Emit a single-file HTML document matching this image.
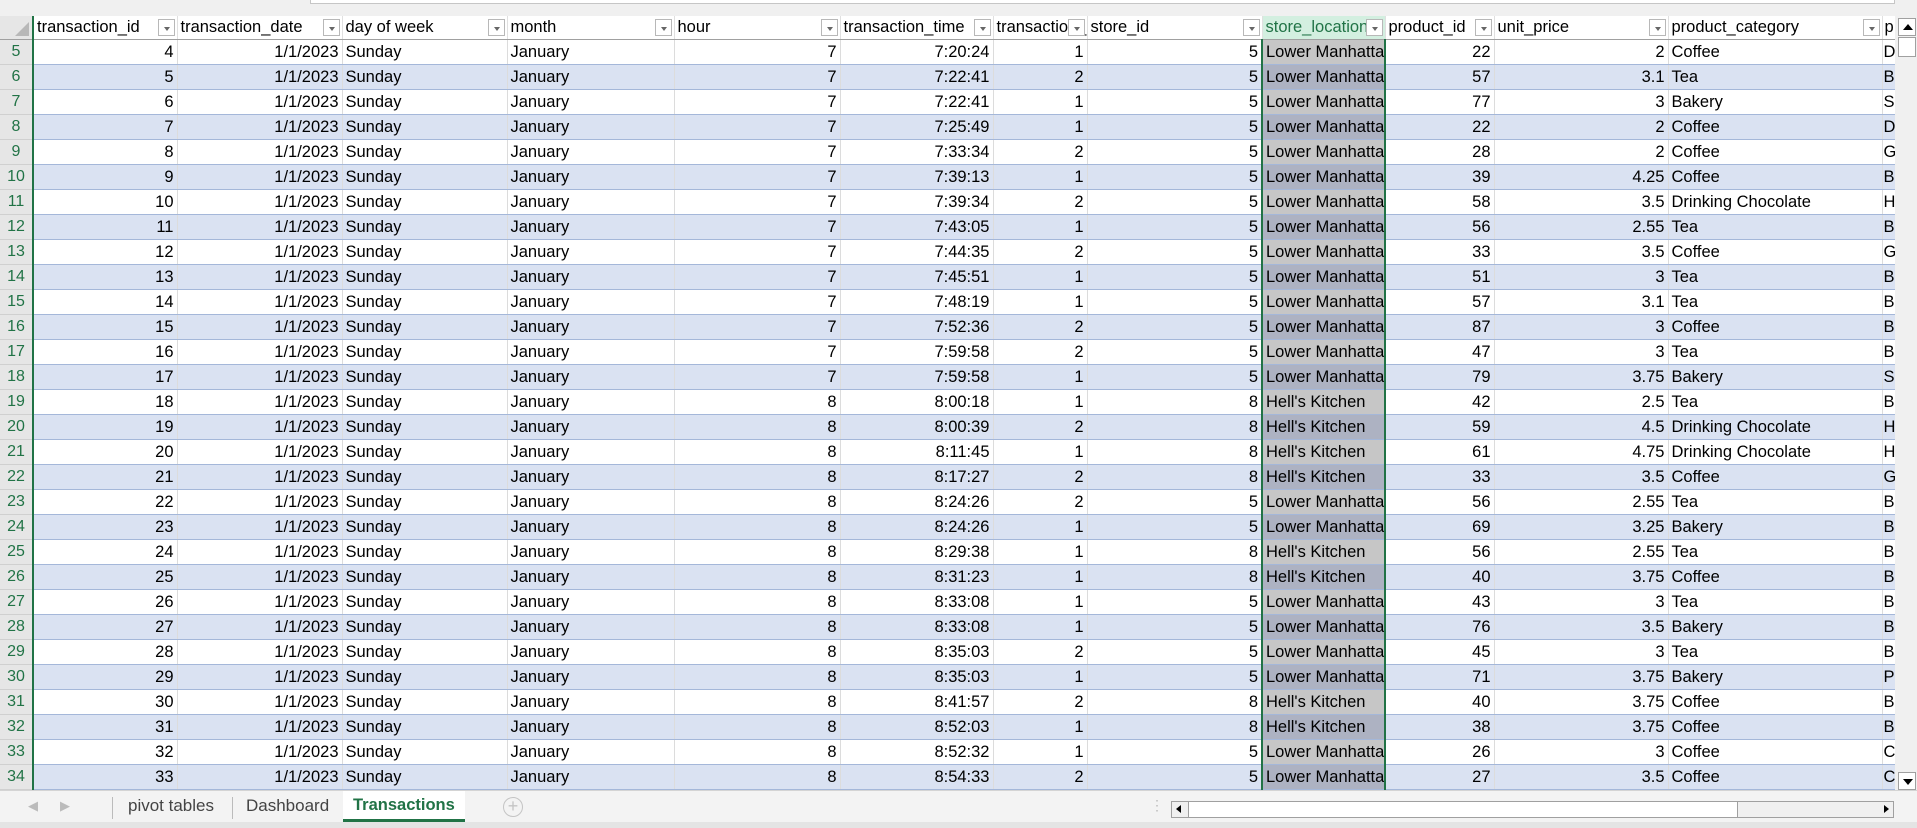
<!DOCTYPE html>
<html><head><meta charset="utf-8">
<style>
*{margin:0;padding:0;box-sizing:border-box}
body{width:1917px;height:828px;overflow:hidden;background:#f3f3f3;font-family:"Liberation Sans",Arial,sans-serif;position:relative}
.top{position:absolute;left:0;top:0;width:1917px;height:16px;background:#f0f0f0}
.top .fb{position:absolute;left:310px;top:-2px;width:1585px;height:6px;background:#fff;border:1px solid #c6c6c6}
table{position:absolute;left:0;top:16px;border-collapse:collapse;table-layout:fixed;width:1895px}
td,th{height:25px;font-size:16.5px;font-weight:normal;white-space:nowrap;overflow:hidden;padding:0 3px;line-height:24px;color:#000;border-right:1px solid #dcdcdc;border-bottom:1px solid #a4b7d9;background:#fff}
th{height:23px;background:#fff;text-align:left;position:relative;border-bottom:1px solid #a0a0a0;border-right:1px solid #e0e0e0;padding-right:20px;line-height:22px}
th i{position:absolute;right:2px;top:3px;width:17px;height:17px;border:1px solid #b8b8b8;background:#fff;font-style:normal}
th i:after{content:"";position:absolute;left:5px;top:7px;border-left:3px solid transparent;border-right:3px solid transparent;border-top:4px solid #666}
th.c0{background:#e6e6e6;border-right:2px solid #217346}
th.c0:after{content:"";position:absolute;right:3px;bottom:3px;border-left:14px solid transparent;border-bottom:14px solid #b8b8b8}
th.sel{background:#d3efe0;color:#217346}
td.rn{background:#e6e6e6;color:#217346;text-align:center;border-right:2px solid #217346;border-bottom:1px solid #d0d0d0;padding:0;font-size:16px}
tr:nth-child(even) td{background:#dae2f2}
tr:nth-child(even) td.rn{background:#e6e6e6}
td.r{text-align:right}
td.s{background:#c6c6c6;border-left:2px solid #217346;border-right:2px solid #217346}
tr:nth-child(even) td.s{background:#adb2c2}
.vs{position:absolute;left:1895px;top:14px;width:22px;height:776px;background:#f0f0f0}
.vs .u,.vs .d{position:absolute;left:3px;width:18px;height:18px;border:1px solid #a0a0a0;background:#fff}
.vs .u{top:4px}.vs .d{top:758px}
.vs .u:after{content:"";position:absolute;left:4px;top:5px;border-left:5px solid transparent;border-right:5px solid transparent;border-bottom:6px solid #000}
.vs .d:after{content:"";position:absolute;left:4px;top:6px;border-left:5px solid transparent;border-right:5px solid transparent;border-top:6px solid #000}
.vs .t{position:absolute;left:3px;top:23px;width:18px;height:20px;border:1px solid #a0a0a0;background:#fff}
.tabs{position:absolute;left:0;top:790px;width:1917px;height:32px;background:#f3f3f3;border-top:1px solid #d4d4d4}
.bot{position:absolute;left:0;top:822px;width:1917px;height:6px;background:#e4e4e4}
.tab{position:absolute;top:0;height:31px;line-height:29px;font-size:17px;color:#444}
.sep{position:absolute;top:6px;width:1px;height:22px;background:#bbb}
.act{background:#fff;color:#217346;font-weight:bold;border-bottom:3px solid #217346;padding:0 10px;font-size:16.5px}
.hs{position:absolute;left:1171px;top:801px;width:723px;height:17px;border:1px solid #a0a0a0;background:#f0f0f0}
.hs .th{position:absolute;left:16px;top:0;width:550px;height:15px;background:#fff;border-left:1px solid #a0a0a0;border-right:1px solid #a0a0a0}
</style></head><body>
<div class="top"><div class="fb"></div></div>
<table>
<colgroup><col style="width:33px"><col style="width:144px"><col style="width:165px"><col style="width:165px"><col style="width:167px"><col style="width:166px"><col style="width:153px"><col style="width:94px"><col style="width:175px"><col style="width:123px"><col style="width:109px"><col style="width:174px"><col style="width:214px"><col style="width:13px"></colgroup>
<thead><tr><th class="c0"></th><th>transaction_id<i></i></th><th>transaction_date<i></i></th><th>day of week<i></i></th><th>month<i></i></th><th>hour<i></i></th><th>transaction_time<i></i></th><th>transaction_qty<i></i></th><th>store_id<i></i></th><th class="sel">store_location<i></i></th><th>product_id<i></i></th><th>unit_price<i></i></th><th>product_category<i></i></th><th style="padding:0 2px">p</th></tr></thead>
<tbody>
<tr><td class="rn">5</td><td class="r">4</td><td class="r">1/1/2023</td><td>Sunday</td><td>January</td><td class="r">7</td><td class="r">7:20:24</td><td class="r">1</td><td class="r">5</td><td class="s">Lower Manhattan</td><td class="r">22</td><td class="r">2</td><td>Coffee</td><td style="padding:0 1px">D</td></tr>
<tr><td class="rn">6</td><td class="r">5</td><td class="r">1/1/2023</td><td>Sunday</td><td>January</td><td class="r">7</td><td class="r">7:22:41</td><td class="r">2</td><td class="r">5</td><td class="s">Lower Manhattan</td><td class="r">57</td><td class="r">3.1</td><td>Tea</td><td style="padding:0 1px">B</td></tr>
<tr><td class="rn">7</td><td class="r">6</td><td class="r">1/1/2023</td><td>Sunday</td><td>January</td><td class="r">7</td><td class="r">7:22:41</td><td class="r">1</td><td class="r">5</td><td class="s">Lower Manhattan</td><td class="r">77</td><td class="r">3</td><td>Bakery</td><td style="padding:0 1px">S</td></tr>
<tr><td class="rn">8</td><td class="r">7</td><td class="r">1/1/2023</td><td>Sunday</td><td>January</td><td class="r">7</td><td class="r">7:25:49</td><td class="r">1</td><td class="r">5</td><td class="s">Lower Manhattan</td><td class="r">22</td><td class="r">2</td><td>Coffee</td><td style="padding:0 1px">D</td></tr>
<tr><td class="rn">9</td><td class="r">8</td><td class="r">1/1/2023</td><td>Sunday</td><td>January</td><td class="r">7</td><td class="r">7:33:34</td><td class="r">2</td><td class="r">5</td><td class="s">Lower Manhattan</td><td class="r">28</td><td class="r">2</td><td>Coffee</td><td style="padding:0 1px">G</td></tr>
<tr><td class="rn">10</td><td class="r">9</td><td class="r">1/1/2023</td><td>Sunday</td><td>January</td><td class="r">7</td><td class="r">7:39:13</td><td class="r">1</td><td class="r">5</td><td class="s">Lower Manhattan</td><td class="r">39</td><td class="r">4.25</td><td>Coffee</td><td style="padding:0 1px">B</td></tr>
<tr><td class="rn">11</td><td class="r">10</td><td class="r">1/1/2023</td><td>Sunday</td><td>January</td><td class="r">7</td><td class="r">7:39:34</td><td class="r">2</td><td class="r">5</td><td class="s">Lower Manhattan</td><td class="r">58</td><td class="r">3.5</td><td>Drinking Chocolate</td><td style="padding:0 1px">H</td></tr>
<tr><td class="rn">12</td><td class="r">11</td><td class="r">1/1/2023</td><td>Sunday</td><td>January</td><td class="r">7</td><td class="r">7:43:05</td><td class="r">1</td><td class="r">5</td><td class="s">Lower Manhattan</td><td class="r">56</td><td class="r">2.55</td><td>Tea</td><td style="padding:0 1px">B</td></tr>
<tr><td class="rn">13</td><td class="r">12</td><td class="r">1/1/2023</td><td>Sunday</td><td>January</td><td class="r">7</td><td class="r">7:44:35</td><td class="r">2</td><td class="r">5</td><td class="s">Lower Manhattan</td><td class="r">33</td><td class="r">3.5</td><td>Coffee</td><td style="padding:0 1px">G</td></tr>
<tr><td class="rn">14</td><td class="r">13</td><td class="r">1/1/2023</td><td>Sunday</td><td>January</td><td class="r">7</td><td class="r">7:45:51</td><td class="r">1</td><td class="r">5</td><td class="s">Lower Manhattan</td><td class="r">51</td><td class="r">3</td><td>Tea</td><td style="padding:0 1px">B</td></tr>
<tr><td class="rn">15</td><td class="r">14</td><td class="r">1/1/2023</td><td>Sunday</td><td>January</td><td class="r">7</td><td class="r">7:48:19</td><td class="r">1</td><td class="r">5</td><td class="s">Lower Manhattan</td><td class="r">57</td><td class="r">3.1</td><td>Tea</td><td style="padding:0 1px">B</td></tr>
<tr><td class="rn">16</td><td class="r">15</td><td class="r">1/1/2023</td><td>Sunday</td><td>January</td><td class="r">7</td><td class="r">7:52:36</td><td class="r">2</td><td class="r">5</td><td class="s">Lower Manhattan</td><td class="r">87</td><td class="r">3</td><td>Coffee</td><td style="padding:0 1px">B</td></tr>
<tr><td class="rn">17</td><td class="r">16</td><td class="r">1/1/2023</td><td>Sunday</td><td>January</td><td class="r">7</td><td class="r">7:59:58</td><td class="r">2</td><td class="r">5</td><td class="s">Lower Manhattan</td><td class="r">47</td><td class="r">3</td><td>Tea</td><td style="padding:0 1px">B</td></tr>
<tr><td class="rn">18</td><td class="r">17</td><td class="r">1/1/2023</td><td>Sunday</td><td>January</td><td class="r">7</td><td class="r">7:59:58</td><td class="r">1</td><td class="r">5</td><td class="s">Lower Manhattan</td><td class="r">79</td><td class="r">3.75</td><td>Bakery</td><td style="padding:0 1px">S</td></tr>
<tr><td class="rn">19</td><td class="r">18</td><td class="r">1/1/2023</td><td>Sunday</td><td>January</td><td class="r">8</td><td class="r">8:00:18</td><td class="r">1</td><td class="r">8</td><td class="s">Hell's Kitchen</td><td class="r">42</td><td class="r">2.5</td><td>Tea</td><td style="padding:0 1px">B</td></tr>
<tr><td class="rn">20</td><td class="r">19</td><td class="r">1/1/2023</td><td>Sunday</td><td>January</td><td class="r">8</td><td class="r">8:00:39</td><td class="r">2</td><td class="r">8</td><td class="s">Hell's Kitchen</td><td class="r">59</td><td class="r">4.5</td><td>Drinking Chocolate</td><td style="padding:0 1px">H</td></tr>
<tr><td class="rn">21</td><td class="r">20</td><td class="r">1/1/2023</td><td>Sunday</td><td>January</td><td class="r">8</td><td class="r">8:11:45</td><td class="r">1</td><td class="r">8</td><td class="s">Hell's Kitchen</td><td class="r">61</td><td class="r">4.75</td><td>Drinking Chocolate</td><td style="padding:0 1px">H</td></tr>
<tr><td class="rn">22</td><td class="r">21</td><td class="r">1/1/2023</td><td>Sunday</td><td>January</td><td class="r">8</td><td class="r">8:17:27</td><td class="r">2</td><td class="r">8</td><td class="s">Hell's Kitchen</td><td class="r">33</td><td class="r">3.5</td><td>Coffee</td><td style="padding:0 1px">G</td></tr>
<tr><td class="rn">23</td><td class="r">22</td><td class="r">1/1/2023</td><td>Sunday</td><td>January</td><td class="r">8</td><td class="r">8:24:26</td><td class="r">2</td><td class="r">5</td><td class="s">Lower Manhattan</td><td class="r">56</td><td class="r">2.55</td><td>Tea</td><td style="padding:0 1px">B</td></tr>
<tr><td class="rn">24</td><td class="r">23</td><td class="r">1/1/2023</td><td>Sunday</td><td>January</td><td class="r">8</td><td class="r">8:24:26</td><td class="r">1</td><td class="r">5</td><td class="s">Lower Manhattan</td><td class="r">69</td><td class="r">3.25</td><td>Bakery</td><td style="padding:0 1px">B</td></tr>
<tr><td class="rn">25</td><td class="r">24</td><td class="r">1/1/2023</td><td>Sunday</td><td>January</td><td class="r">8</td><td class="r">8:29:38</td><td class="r">1</td><td class="r">8</td><td class="s">Hell's Kitchen</td><td class="r">56</td><td class="r">2.55</td><td>Tea</td><td style="padding:0 1px">B</td></tr>
<tr><td class="rn">26</td><td class="r">25</td><td class="r">1/1/2023</td><td>Sunday</td><td>January</td><td class="r">8</td><td class="r">8:31:23</td><td class="r">1</td><td class="r">8</td><td class="s">Hell's Kitchen</td><td class="r">40</td><td class="r">3.75</td><td>Coffee</td><td style="padding:0 1px">B</td></tr>
<tr><td class="rn">27</td><td class="r">26</td><td class="r">1/1/2023</td><td>Sunday</td><td>January</td><td class="r">8</td><td class="r">8:33:08</td><td class="r">1</td><td class="r">5</td><td class="s">Lower Manhattan</td><td class="r">43</td><td class="r">3</td><td>Tea</td><td style="padding:0 1px">B</td></tr>
<tr><td class="rn">28</td><td class="r">27</td><td class="r">1/1/2023</td><td>Sunday</td><td>January</td><td class="r">8</td><td class="r">8:33:08</td><td class="r">1</td><td class="r">5</td><td class="s">Lower Manhattan</td><td class="r">76</td><td class="r">3.5</td><td>Bakery</td><td style="padding:0 1px">B</td></tr>
<tr><td class="rn">29</td><td class="r">28</td><td class="r">1/1/2023</td><td>Sunday</td><td>January</td><td class="r">8</td><td class="r">8:35:03</td><td class="r">2</td><td class="r">5</td><td class="s">Lower Manhattan</td><td class="r">45</td><td class="r">3</td><td>Tea</td><td style="padding:0 1px">B</td></tr>
<tr><td class="rn">30</td><td class="r">29</td><td class="r">1/1/2023</td><td>Sunday</td><td>January</td><td class="r">8</td><td class="r">8:35:03</td><td class="r">1</td><td class="r">5</td><td class="s">Lower Manhattan</td><td class="r">71</td><td class="r">3.75</td><td>Bakery</td><td style="padding:0 1px">P</td></tr>
<tr><td class="rn">31</td><td class="r">30</td><td class="r">1/1/2023</td><td>Sunday</td><td>January</td><td class="r">8</td><td class="r">8:41:57</td><td class="r">2</td><td class="r">8</td><td class="s">Hell's Kitchen</td><td class="r">40</td><td class="r">3.75</td><td>Coffee</td><td style="padding:0 1px">B</td></tr>
<tr><td class="rn">32</td><td class="r">31</td><td class="r">1/1/2023</td><td>Sunday</td><td>January</td><td class="r">8</td><td class="r">8:52:03</td><td class="r">1</td><td class="r">8</td><td class="s">Hell's Kitchen</td><td class="r">38</td><td class="r">3.75</td><td>Coffee</td><td style="padding:0 1px">B</td></tr>
<tr><td class="rn">33</td><td class="r">32</td><td class="r">1/1/2023</td><td>Sunday</td><td>January</td><td class="r">8</td><td class="r">8:52:32</td><td class="r">1</td><td class="r">5</td><td class="s">Lower Manhattan</td><td class="r">26</td><td class="r">3</td><td>Coffee</td><td style="padding:0 1px">C</td></tr>
<tr><td class="rn">34</td><td class="r">33</td><td class="r">1/1/2023</td><td>Sunday</td><td>January</td><td class="r">8</td><td class="r">8:54:33</td><td class="r">2</td><td class="r">5</td><td class="s">Lower Manhattan</td><td class="r">27</td><td class="r">3.5</td><td>Coffee</td><td style="padding:0 1px">C</td></tr>
</tbody></table>
<div class="vs"><div class="u"></div><div class="t"></div><div class="d"></div></div>
<div class="tabs">
<div class="tab" style="left:28px;color:#bbb;font-size:13px">&#9664;</div>
<div class="tab" style="left:60px;color:#bbb;font-size:13px">&#9654;</div>
<div class="sep" style="left:112px"></div>
<div class="tab" style="left:128px">pivot tables</div>
<div class="sep" style="left:232px"></div>
<div class="tab" style="left:246px">Dashboard</div>
<div class="tab act" style="left:343px;width:122px">Transactions</div>
<div class="tab" style="left:503px;top:6px;width:20px;height:20px;border:1px solid #c4c4c4;border-radius:50%;line-height:17px;text-align:center;color:#c4c4c4;font-size:18px">+</div>
<div class="tab" style="left:1150px;color:#bbb;font-size:14px;letter-spacing:0">&#8942;</div>
</div>
<div class="hs"><div class="th"></div>
<div style="position:absolute;left:4px;top:3px;border-top:4px solid transparent;border-bottom:4px solid transparent;border-right:5px solid #000"></div>
<div style="position:absolute;right:4px;top:3px;border-top:4px solid transparent;border-bottom:4px solid transparent;border-left:5px solid #000"></div>
</div>
<div class="bot"></div>
</body></html>
